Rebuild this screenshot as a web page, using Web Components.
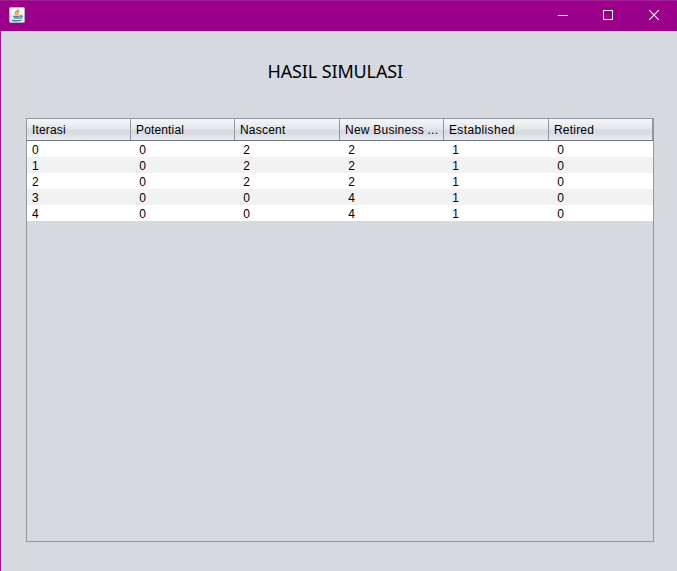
<!DOCTYPE html>
<html lang="id">
<head>
<meta charset="utf-8">
<title>Hasil Simulasi</title>
<style>
html,body{margin:0;height:100%;overflow:hidden;background:#d6d9e0}
</style>
</head>
<body>
<app-window>
  <title-bar slot="bar"></title-bar>
  <page-title>HASIL SIMULASI</page-title>
  <data-table></data-table>
</app-window>
<script>
function define(name, html, setup) {
  customElements.define(name, class extends HTMLElement {
    constructor() {
      super();
      this.attachShadow({mode: 'open'}).innerHTML = html.trim();
      if (setup) setup(this.shadowRoot);
    }
  });
}

define('java-icon', `
<style>:host{display:block;width:16px;height:16px}svg{display:block}</style>
<svg width="16" height="16" viewBox="0 0 16 16">
  <defs><linearGradient id="g" x1="0" y1="0" x2="0" y2="1"><stop offset="0" stop-color="#fff"/><stop offset="1" stop-color="#dfe5ea"/></linearGradient></defs>
  <rect x=".5" y=".5" width="15" height="15" rx="1" fill="url(#g)" stroke="#a9b4c4"/>
  <path d="M9.4 2C9.8 3.8 5.8 4.4 6.3 6.2C6.6 7 7.2 7.2 7.3 8M10.8 4.4C8.8 4.9 8 5.7 8.7 6.5C9.1 7 8.9 7.5 8.5 8" fill="none" stroke="#ee8a35" stroke-width="1.4"/>
  <path d="M4 9.5H10.8M5 11.2H10.4" fill="none" stroke="#5b829c" stroke-width="1.3"/>
  <path d="M3 13.4C5 14 10.4 14 12.4 13" fill="none" stroke="#46718f" stroke-width="1.3"/>
  <path d="M10.8 9C13.9 8 13.8 10.8 10.8 11.3" fill="none" stroke="#46718f" stroke-width="1.2"/>
</svg>`);

define('window-button', `
<style>:host{display:flex;width:46px;height:28px;align-items:center;justify-content:center;color:#fff}</style>
<slot></slot>`);

define('title-bar', `
<style>
:host{display:flex;height:31px;box-sizing:border-box;border-top:1px solid #a11c95;background:#9b008a;align-items:flex-start}
java-icon{margin:6px 0 0 9px}
.controls{display:flex;margin-left:auto}
svg{display:block}
</style>
<java-icon></java-icon>
<div class="controls">
  <window-button><svg width="12" height="12"><path d="M2 6.5H12" stroke="#fff"/></svg></window-button>
  <window-button><svg width="12" height="12"><rect x="1.5" y="1.5" width="9" height="9" fill="none" stroke="#fff"/></svg></window-button>
  <window-button><svg width="12" height="12"><path d="M1.2 1.2L10.8 10.8M10.8 1.2L1.2 10.8" stroke="#fff" stroke-width="1.1"/></svg></window-button>
</div>`);

define('page-title', `
<style>
:host{display:block;height:87px;box-sizing:border-box;padding:29px 0 0 241.5px;font:18px/22px "Noto Sans",sans-serif;color:#000;white-space:nowrap;letter-spacing:-.13px}
</style><slot></slot>`);

define('app-window', `
<style>
:host{display:flex;flex-direction:column;width:677px;height:571px;background:#d6d9e0}
main{flex:1;box-sizing:border-box;border-left:1px solid #a8149a;padding:0 23px 29px 25px;display:flex;flex-direction:column}
::slotted(data-table){flex:1}
</style>
<slot name="bar"></slot><main><slot></slot></main>`);

define('header-cell', `
<style>
:host{display:block;box-sizing:border-box;height:21px;padding:1px 0 0 5px;line-height:21px;white-space:nowrap;
background:linear-gradient(#f6f7f9 0,#e4e6eb 45%,#d7dae1 55%,#d9dce3 70%,#ebeef4 100%);border-right:1px solid #9095a0}
</style><slot></slot>`);

define('table-cell', `
<style>:host{display:block;padding-left:5px;line-height:19px;height:16px;white-space:pre}</style><slot></slot>`);

define('data-table', `
<style>
:host{display:block;box-sizing:border-box;border:1px solid #9297a1;font:12px "Liberation Sans",Arial,sans-serif;color:#000}
.row,.head{display:grid;grid-template-columns:104px 104px 105px 104px 105px 104px}
.head{border-bottom:1px solid #737782}
.row{height:16px;background:#fff}
.row:nth-child(even){background:#f2f2f2}
</style>
<div class="head"></div>`, root => {
  const head = root.querySelector('.head');
  const spacing = [.15, .15, .2, .24, .36, .2];
  ['Iterasi', 'Potential', 'Nascent', 'New Business ...', 'Established', 'Retired'].forEach((t, i) => {
    const c = document.createElement('header-cell');
    c.textContent = t;
    c.style.letterSpacing = spacing[i] + 'px';
    head.append(c);
  });
  const body = document.createElement('div');
  root.append(body);
  [[0,0,2,2,1,0],[1,0,2,2,1,0],[2,0,2,2,1,0],[3,0,0,4,1,0],[4,0,0,4,1,0]].forEach(r => {
    const row = document.createElement('div');
    row.className = 'row';
    r.forEach((v, i) => {
      const c = document.createElement('table-cell');
      c.textContent = (i ? ' ' : '') + v;
      row.append(c);
    });
    body.append(row);
  });
});
</script>
</body>
</html>
